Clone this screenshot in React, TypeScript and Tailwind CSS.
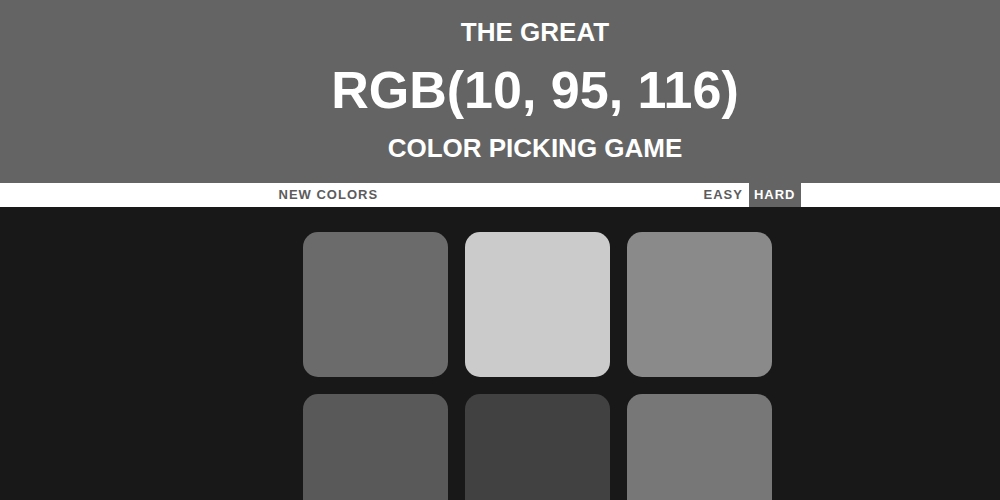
import React from 'react';

const squares = ['#6b6b6b', '#cbcbcb', '#8a8a8a', '#595959', '#414141', '#777777'];

const App: React.FC = () => {
  return (
    <div className="min-h-[500px] bg-[#181818] font-['Liberation_Sans',Arial,sans-serif] font-bold">
      {/* Title */}
      <header className="bg-[#646464] text-white pl-[70px] pt-[19px] pb-[22px] text-center">
        <h1 className="text-[26px] leading-[26px]">THE GREAT</h1>
        <h2 className="mt-[19px] text-[52px] leading-[52px]">RGB(10, 95, 116)</h2>
        <h3 className="mt-[19px] text-[26px] leading-[26px]">COLOR PICKING GAME</h3>
      </header>

      {/* Stripe */}
      <div className="bg-white pl-[74px]">
        <div className="mx-auto flex w-[527px] items-stretch justify-between text-[13px] leading-[24px] tracking-[1px] text-[#5c5c5c]">
          <button className="px-[5px] uppercase">New Colors</button>
          <span className="flex-1" />
          <div className="flex">
            <button className="px-[6px]">EASY</button>
            <button className="bg-[#646464] px-[5px] text-white">HARD</button>
          </div>
        </div>
      </div>

      {/* Squares */}
      <div className="pl-[75px] pt-[25px]">
        <div className="mx-auto grid w-[469px] grid-cols-[repeat(3,145px)] gap-x-[17px] gap-y-[17px]">
          {squares.map((c, i) => (
            <div
              key={i}
              className="h-[145px] w-[145px] rounded-[15px]"
              style={{ backgroundColor: c }}
            />
          ))}
        </div>
      </div>
    </div>
  );
};

export default App;
